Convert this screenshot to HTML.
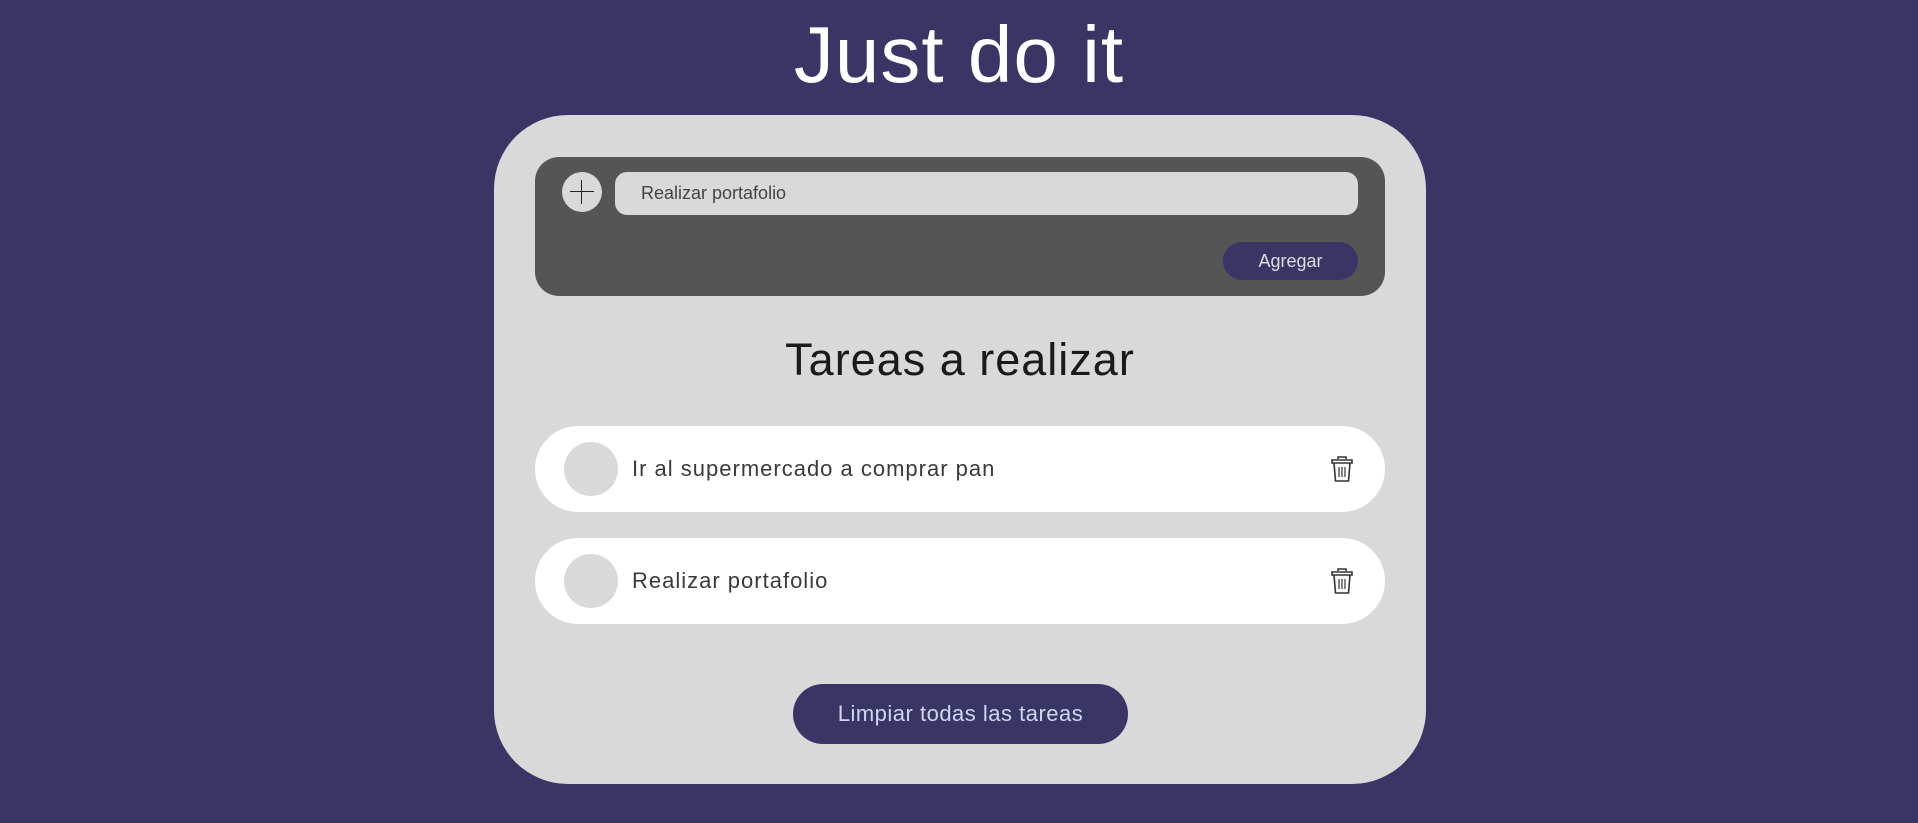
<!DOCTYPE html>
<html><head><meta charset="utf-8"><style>
*{margin:0;padding:0;box-sizing:border-box}
body{width:1918px;height:823px;background:#393565;font-family:"Liberation Sans",sans-serif;position:relative;overflow:hidden}
.abs{position:absolute}
h1{position:absolute;left:0;width:1918px;text-align:center;top:9px;color:#fff;font-weight:normal;font-size:80px;letter-spacing:1px}
.card{left:494px;top:115px;width:932px;height:669px;background:#d9d9d9;border-radius:74px}
.panel{left:535px;top:157px;width:850px;height:139px;background:#555;border-radius:24px}
.plus{left:562px;top:172px;width:40px;height:40px;border-radius:50%;background:#d9d9d9}
.plus:before{content:"";position:absolute;left:8px;top:19px;width:24px;height:1.2px;background:#222}
.plus:after{content:"";position:absolute;left:19px;top:8px;width:1.2px;height:24px;background:#222}
.input{left:615px;top:172px;width:743px;height:43px;background:#d9d9d9;border-radius:12px;color:#444;font-size:18px;line-height:43px;padding-left:26px}
.add{left:1223px;top:242px;width:135px;height:38px;background:#393565;border-radius:19px;color:#ddd;font-size:18px;line-height:38px;text-align:center}
h2{position:absolute;left:494px;width:932px;text-align:center;top:334px;font-weight:normal;font-size:45px;letter-spacing:1px;color:#1a1a1a}
.task{left:535px;width:850px;height:86px;background:#fff;border-radius:43px}
.task .c{position:absolute;left:29px;top:16px;width:54px;height:54px;border-radius:50%;background:#d9d9d9}
.task .t{position:absolute;left:97px;top:0;line-height:86px;font-size:22px;letter-spacing:1px;color:#3a3a3a}
.task svg{position:absolute;left:795px;top:29px}
.clear{left:793px;top:684px;width:335px;height:60px;background:#393565;border-radius:30px;color:#cfd8ee;font-size:22px;letter-spacing:0.5px;line-height:60px;text-align:center}
</style></head><body>
<h1>Just do it</h1>
<div class="abs card"></div>
<div class="abs panel"></div>
<div class="abs plus"></div>
<div class="abs input">Realizar portafolio</div>
<div class="abs add">Agregar</div>
<h2>Tareas a realizar</h2>
<div class="abs task" style="top:426px"><div class="c"></div><div class="t">Ir al supermercado a comprar pan</div>
<svg width="24" height="28" viewBox="0 0 24 28" fill="none" stroke="#333" stroke-width="1.6"><path d="M8 4V2h8v2"/><path d="M2 5h20v3H2z"/><path d="M4 8l1.5 18h13L20 8"/><path d="M9 12v10M12 12v10M15 12v10" stroke-width="1.2"/></svg></div>
<div class="abs task" style="top:538px"><div class="c"></div><div class="t">Realizar portafolio</div>
<svg width="24" height="28" viewBox="0 0 24 28" fill="none" stroke="#333" stroke-width="1.6"><path d="M8 4V2h8v2"/><path d="M2 5h20v3H2z"/><path d="M4 8l1.5 18h13L20 8"/><path d="M9 12v10M12 12v10M15 12v10" stroke-width="1.2"/></svg></div>
<div class="abs clear">Limpiar todas las tareas</div>
</body></html>
